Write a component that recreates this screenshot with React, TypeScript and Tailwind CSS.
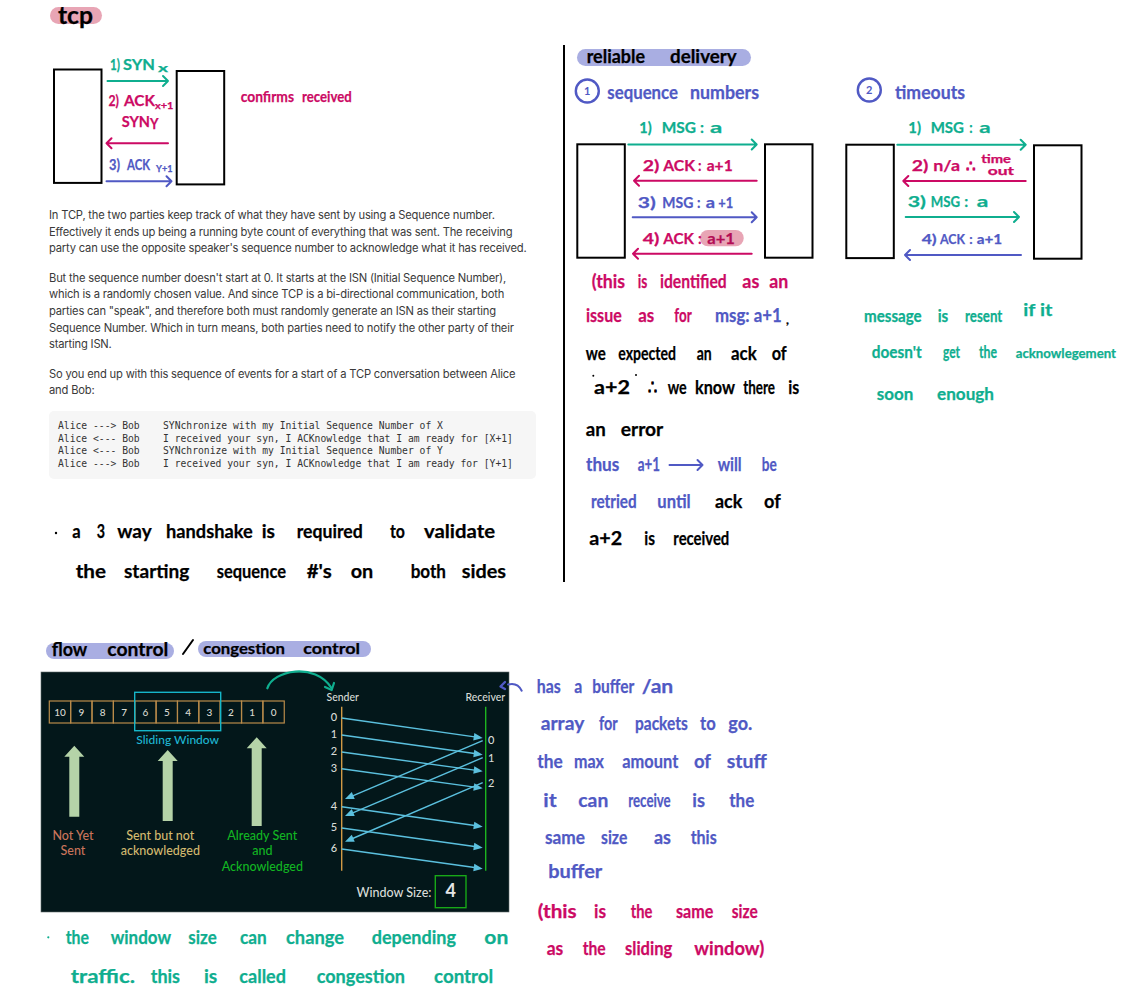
import React from "react";

type W = [string, number, number];

const INK = "font-['Lato'] font-bold text-[19px] fill-current stroke-current stroke-[0.25px]";
const BLACK = "text-black";
const TEAL = "text-[#0fae8f]";
const CRIM = "text-[#cc0a64]";
const INDIGO = "text-[#5059c4]";

function L({ y, w, s = "" }: { y: number; w: W[]; s?: string }) {
  return (
    <>
      {w.map(([t, a, b]) => (
        <text key={t + a} x={a} y={y} textLength={b - a} lengthAdjust="spacingAndGlyphs" className={s}>
          {t}
        </text>
      ))}
    </>
  );
}

function Arrow({ a, b, y, c }: { a: number; b: number; y: number; c: string }) {
  const d = b > a ? -5 : 5;
  return (
    <g className={c}>
      <path
        d={`M${a} ${y}H${b}M${b + d} ${y - 5}L${b} ${y}L${b + d} ${y + 5}`}
        fill="none"
        stroke="currentColor"
        strokeWidth="2"
        strokeLinecap="round"
        strokeLinejoin="round"
      />
    </g>
  );
}

function Box({ x, y }: { x: number; y: number }) {
  return <rect x={x} y={y} width="47.5" height="113.4" fill="white" stroke="black" strokeWidth="2" />;
}

function Circle({ cx, cy, n }: { cx: number; cy: number; n: string }) {
  return (
    <g className={INDIGO}>
      <circle cx={cx} cy={cy} r="11.5" fill="none" stroke="currentColor" strokeWidth="2.4" />
      <text x={cx} y={cy + 4} textAnchor="middle" className="font-['Lato'] font-bold text-[11px] fill-current">
        {n}
      </text>
    </g>
  );
}

function Pill({ cls, vb, w, h, children }: { cls: string; vb: string; w: number; h: number; children: React.ReactNode }) {
  return (
    <div className={`rounded-full ${cls}`}>
      <svg viewBox={vb} width={w} height={h} className="block overflow-visible">
        {children}
      </svg>
    </div>
  );
}

function TcpTitle() {
  return (
    <svg viewBox="50 0 60 34" width="60" height="34" className="ml-[50px] block">
      <rect x="50" y="7" width="52" height="17" rx="8.5" fill="#e8a5b5" />
      <g className={`${INK} ${BLACK}`}>
        <L y={24} s="text-[24px]" w={[["tcp", 58, 93]]} />
      </g>
    </svg>
  );
}

function TcpDiagram() {
  return (
    <svg viewBox="50 60 310 130" width="310" height="130" className="ml-[50px] mt-[26px] block overflow-visible">
      <Box x={54} y={69.5} />
      <Box x={176.7} y={71} />
      <g className={`${INK} ${TEAL}`}>
        <L y={70} s="text-[15px]" w={[["1)", 110, 120], ["SYN", 123, 155]]} />
        <L y={72} s="text-[12px]" w={[["x", 158, 168]]} />
      </g>
      <Arrow a={107.5} b={168} y={81} c={TEAL} />
      <g className={`${INK} ${CRIM}`}>
        <L y={106} s="text-[15px]" w={[["2)", 108.5, 119], ["ACK", 124, 155]]} />
        <L y={108.5} s="text-[10px]" w={[["x+1", 155, 173.5]]} />
        <L y={126.5} s="text-[15px]" w={[["SYN", 121.7, 150]]} />
        <L y={129} s="text-[15px]" w={[["Y", 150, 158.5]]} />
      </g>
      <Arrow a={168} b={106.5} y={143.3} c={CRIM} />
      <g className={`${INK} ${INDIGO}`}>
        <L y={170} s="text-[15px]" w={[["3)", 109, 120], ["ACK", 127, 150]]} />
        <L y={172} s="text-[10px]" w={[["Y+1", 156, 172.5]]} />
      </g>
      <Arrow a={106.5} b={171.5} y={181.3} c={INDIGO} />
      <g className={`${INK} ${CRIM}`}>
        <L y={101.5} s="text-[16px]" w={[["confirms", 240.7, 294], ["received", 302, 351.7]]} />
      </g>
    </svg>
  );
}

function Article() {
  return (
    <div className="mt-[17px] ml-[49px] w-[487px] font-['Inter'] text-[11.2px] tracking-[-0.19px] leading-[16.7px] text-[#3a3a3a] whitespace-nowrap">
      <p>
        In TCP, the two parties keep track of what they have sent by using a Sequence number.
        <br />
        Effectively it ends up being a running byte count of everything that was sent. The receiving
        <br />
        party can use the opposite speaker's sequence number to acknowledge what it has received.
      </p>
      <p className="mt-[12.5px]">
        But the sequence number doesn't start at 0. It starts at the ISN (Initial Sequence Number),
        <br />
        which is a randomly chosen value. And since TCP is a bi-directional communication, both
        <br />
        parties can "speak", and therefore both must randomly generate an ISN as their starting
        <br />
        Sequence Number. Which in turn means, both parties need to notify the other party of their
        <br />
        starting ISN.
      </p>
      <p className="mt-[12.5px]">
        So you end up with this sequence of events for a start of a TCP conversation between Alice
        <br />
        and Bob:
      </p>
      <pre className="mt-[12px] h-[68px] rounded-[5px] bg-[#f6f6f6] pl-[9px] pt-[9px] font-['DejaVu_Sans_Mono'] text-[9.7px] tracking-normal leading-[12.7px] text-[#333]">
        {`Alice ---> Bob    SYNchronize with my Initial Sequence Number of X
Alice <--- Bob    I received your syn, I ACKnowledge that I am ready for [X+1]
Alice <--- Bob    SYNchronize with my Initial Sequence Number of Y
Alice ---> Bob    I received your syn, I ACKnowledge that I am ready for [Y+1]`}
      </pre>
    </div>
  );
}

function Handshake() {
  return (
    <svg viewBox="50 520 470 75" width="470" height="75" className="mt-[41px] ml-[50px] block overflow-visible">
      <circle cx="56" cy="533" r="1.2" fill="black" />
      <g className={`${INK} ${BLACK}`}>
        <L
          y={538.3}
          w={[
            ["a", 72.3, 80.7],
            ["3", 96.7, 105],
            ["way", 117.3, 151.7],
            ["handshake", 166, 252.7],
            ["is", 261.7, 275],
            ["required", 296.7, 362.7],
            ["to", 390, 405],
            ["validate", 424, 495],
          ]}
        />
        <L
          y={578.3}
          w={[
            ["the", 75.7, 106],
            ["starting", 124, 189.3],
            ["sequence", 216.7, 286],
            ["#'s", 306.7, 331.7],
            ["on", 350.7, 373.3],
            ["both", 410.7, 446],
            ["sides", 461.7, 506],
          ]}
        />
      </g>
    </svg>
  );
}

function SequenceNotes() {
  return (
    <svg viewBox="570 75 270 480" width="270" height="480" className="block shrink-0 overflow-visible">
      <Circle cx={587.3} cy={91} n="1" />
      <g className={`${INK} ${INDIGO}`}>
        <L y={99} w={[["sequence", 607.3, 678], ["numbers", 690, 759]]} />
      </g>
      <Box x={577.3} y={144.3} />
      <Box x={765} y={144.3} />
      <rect x="700" y="230" width="43.7" height="16.3" rx="8" fill="#e8a5b5" />
      <g className={`${INK} ${TEAL}`}>
        <L y={133.3} s="text-[15px]" w={[["1)", 639.3, 651.7], ["MSG", 661.7, 696], [":", 700, 704], ["a", 710, 722.3]]} />
      </g>
      <Arrow a={628.3} b={756.7} y={144.5} c={TEAL} />
      <g className={`${INK} ${CRIM}`}>
        <L y={170.7} s="text-[15px]" w={[["2)", 642.7, 659.3], ["ACK", 663.3, 695], [":", 698, 701.5], ["a+1", 706.7, 732.7]]} />
      </g>
      <Arrow a={756.7} b={634} y={180.7} c={CRIM} />
      <g className={`${INK} ${INDIGO}`}>
        <L y={208.3} s="text-[15px]" w={[["3)", 637.7, 655.7], ["MSG", 662.3, 693.3], [":", 697, 700.5], ["a", 705.7, 715], ["+1", 718.3, 733.3]]} />
      </g>
      <Arrow a={632.7} b={756.7} y={217.3} c={INDIGO} />
      <g className={`${INK} ${CRIM}`}>
        <L y={244.3} s="text-[15px]" w={[["4)", 642.7, 659.3], ["ACK", 663.3, 694], [":", 698, 701.7]]} />
        <g className="text-[#b30d55]">
          <L y={243.5} s="text-[15px]" w={[["a+1", 707.3, 735]]} />
        </g>
      </g>
      <Arrow a={751.7} b={633} y={253.7} c={CRIM} />
      <g className={`${INK} ${CRIM}`}>
        <L y={288.3} w={[["(this", 591.7, 625], ["is", 637.7, 647.3], ["identified", 660, 726.7], ["as", 742.3, 759.3], ["an", 769.3, 788.3]]} />
        <L y={321.7} w={[["issue", 586, 621.7], ["as", 638.3, 654.3], ["for", 674.3, 691.7]]} />
      </g>
      <g className={`${INK} ${INDIGO}`}>
        <L y={321.7} w={[["msg: a+1", 715, 781.7]]} />
      </g>
      <g className={`${INK} ${BLACK}`}>
        <L y={324} s="text-[12px]" w={[[",", 786, 789]]} />
        <L y={360} w={[["we", 585.7, 605.7], ["expected", 618.3, 676], ["an", 696.7, 711.7], ["ack", 731, 756.7], ["of", 771.7, 786.7]]} />
        <L y={394.3} w={[["a+2", 594, 630], ["∴", 648, 657], ["we", 667.7, 686.7], ["know", 695, 735], ["there", 743.3, 775], ["is", 788.3, 799.3]]} />
        <L y={436} w={[["an", 585.7, 605.7], ["error", 620.7, 663.3]]} />
      </g>
      <circle cx="593.3" cy="375.7" r="1" fill="black" />
      <circle cx="636" cy="375" r="1" fill="black" />
      <g className={`${INK} ${INDIGO}`}>
        <L y={470.7} w={[["thus", 586, 619.3], ["a+1", 637.7, 660], ["will", 717.7, 741.7], ["be", 761.7, 776.7]]} />
        <L y={507.7} w={[["retried", 591, 636.7], ["until", 657.3, 690.7]]} />
      </g>
      <Arrow a={669.5} b={702.5} y={465} c={INDIGO} />
      <g className={`${INK} ${BLACK}`}>
        <L y={507.7} w={[["ack", 715, 742.3], ["of", 764, 780.7]]} />
        <L y={545} w={[["a+2", 589.3, 622.3], ["is", 644.3, 655], ["received", 673.3, 729.3]]} />
      </g>
    </svg>
  );
}

function TimeoutNotes() {
  return (
    <svg viewBox="840 75 293 340" width="293" height="340" className="block shrink-0 overflow-visible">
      <Circle cx={869.3} cy={90} n="2" />
      <g className={`${INK} ${INDIGO}`}>
        <L y={99} w={[["timeouts", 895, 965]]} />
      </g>
      <Box x={846.3} y={144.7} />
      <Box x={1034} y={145.3} />
      <g className={`${INK} ${TEAL}`}>
        <L y={133.3} s="text-[15px]" w={[["1)", 908.3, 921], ["MSG", 930.7, 964], [":", 969.3, 972.7], ["a", 979.3, 990.7]]} />
      </g>
      <Arrow a={897.3} b={1025.7} y={144.7} c={TEAL} />
      <g className={`${INK} ${CRIM}`}>
        <L y={170.7} s="text-[15px]" w={[["2)", 911.7, 928.3], ["n/a", 933.3, 960], ["∴", 966, 976]]} />
        <L y={162.5} s="text-[10.4px]" w={[["time", 981.3, 1011]]} />
        <L y={175} s="text-[10.4px]" w={[["out", 987.7, 1014]]} />
      </g>
      <Arrow a={1025.7} b={903.3} y={181} c={CRIM} />
      <g className={`${INK} ${TEAL}`}>
        <L y={206.7} s="text-[15px]" w={[["3)", 907.7, 926], ["MSG", 930.7, 960], [":", 964.3, 968.3], ["a", 976.7, 988.3]]} />
      </g>
      <Arrow a={905.7} b={1019} y={217} c={TEAL} />
      <g className={`${INK} ${INDIGO}`}>
        <L y={244.3} s="text-[14px]" w={[["4)", 921.7, 936.7], ["ACK", 940, 965], [":", 969.3, 972.7], ["a+1", 976.7, 1002.3]]} />
      </g>
      <Arrow a={1021} b={905} y={255} c={INDIGO} />
      <g className={`${INK} ${TEAL}`}>
        <L y={321.7} s="text-[17px]" w={[["message", 864, 921.7], ["is", 937.7, 948.3], ["resent", 965, 1002.3]]} />
        <L y={316} s="text-[17px]" w={[["if it", 1023.3, 1052.3]]} />
        <L y={358.3} s="text-[17px]" w={[["doesn't", 871.7, 921.7], ["get", 943, 960], ["the", 979, 997]]} />
        <L y={358.3} s="text-[13px]" w={[["acknowlegement", 1015.7, 1116]]} />
        <L y={400} s="text-[17px]" w={[["soon", 876.7, 913.3], ["enough", 937, 994]]} />
      </g>
    </svg>
  );
}

function Slash() {
  return (
    <svg viewBox="174 636 24 24" width="24" height="24" className="block shrink-0 overflow-visible">
      <path d="M183 653L193 639" stroke="black" strokeWidth="2" strokeLinecap="round" />
    </svg>
  );
}

const CELLS = ["10", "9", "8", "7", "6", "5", "4", "3", "2", "1", "0"];
const DATA: [number, number][] = [[718, 738], [735, 754.7], [752, 771.3], [768.7, 788.3], [806.7, 826.7], [828, 847.7], [849, 868.7]];
const ACKS: [number, number][] = [[740.7, 799], [757.7, 816], [782.7, 841.7]];
const LEFT: [string, number][] = [["0", 717], ["1", 734.3], ["2", 751.3], ["3", 768], ["4", 806.3], ["5", 827.3], ["6", 848.3]];
const RIGHT: [string, number][] = [["0", 740.3], ["1", 757.7], ["2", 783]];
const UPARROWS: [number, number, number, number][] = [[74.3, 745.7, 756.7, 816.7], [167.7, 750, 761, 821], [256.7, 737.3, 748.3, 826]];

function head(x1: number, y1: number, x2: number, y2: number) {
  const an = Math.atan2(y2 - y1, x2 - x1);
  const l = 9;
  const w = 3.8;
  const bx = x2 - Math.cos(an) * l;
  const by = y2 - Math.sin(an) * l;
  const nx = -Math.sin(an) * w;
  const ny = Math.cos(an) * w;
  return `${x2},${y2} ${bx + nx},${by + ny} ${bx - nx},${by - ny}`;
}

function WindowPicture() {
  const t = "font-['Lato'] font-medium";
  return (
    <svg viewBox="41 672 468 240" width="468" height="240" className="ml-[41px] block overflow-visible">
      <rect x="41" y="672" width="468" height="240" fill="#03171a" stroke="#5f6a6a" strokeWidth="0.6" />
      {CELLS.map((n, i) => (
        <g key={n}>
          <rect x={49.3 + i * 21.36} y="701" width="21.36" height="22" fill="none" stroke="#b98b4a" strokeWidth="1.2" />
          <text x={60 + i * 21.36} y="716" textAnchor="middle" fill="#d9d9cf" className={`${t} text-[10px]`}>
            {n}
          </text>
        </g>
      ))}
      <rect x="134.7" y="692.3" width="86" height="38.4" fill="none" stroke="#16b6c9" strokeWidth="1.4" />
      <text x="177.7" y="744" textAnchor="middle" fill="#1fb6d2" className={`${t} text-[12px]`}>
        Sliding Window
      </text>
      {UPARROWS.map(([x, a, b, c]) => (
        <polygon key={x} points={`${x},${a} ${x + 10},${b} ${x + 5},${b} ${x + 5},${c} ${x - 5},${c} ${x - 5},${b} ${x - 10},${b}`} fill="#b5d3a8" />
      ))}
      <g fill="#c9745a" className={`${t} text-[12.5px]`} textAnchor="middle">
        <text x="73" y="840">Not Yet</text>
        <text x="73" y="855.3">Sent</text>
      </g>
      <g fill="#d2b96f" className={`${t} text-[12.5px]`} textAnchor="middle">
        <text x="160.3" y="840">Sent but not</text>
        <text x="160.3" y="855.3">acknowledged</text>
      </g>
      <g fill="#12b522" className={`${t} text-[12.5px]`} textAnchor="middle">
        <text x="262.3" y="840">Already Sent</text>
        <text x="262.3" y="855.3">and</text>
        <text x="262.3" y="870.7">Acknowledged</text>
      </g>
      <g fill="#d8dcd8" className={`${t} text-[10.5px]`} textAnchor="middle">
        <text x="342.7" y="701">Sender</text>
        <text x="485.3" y="701">Receiver</text>
      </g>
      <path d="M341.7 706.7V870.7" stroke="#d19a45" strokeWidth="1.4" />
      <path d="M485.7 706.7V870.7" stroke="#1db41f" strokeWidth="1.4" />
      <g fill="#d8dcd8" className={`${t} text-[11px]`} textAnchor="middle">
        {LEFT.map(([n, y]) => (
          <text key={n} x="334" y={y + 4}>{n}</text>
        ))}
        {RIGHT.map(([n, y]) => (
          <text key={n} x="491.3" y={y + 4}>{n}</text>
        ))}
      </g>
      {DATA.map(([a, b]) => (
        <g key={a}>
          <line x1="341.7" y1={a} x2="480" y2={b - 0.4} stroke="#5bc0de" strokeWidth="1.4" />
          <polygon points={head(341.7, a, 482.7, b)} fill="#5bc0de" />
        </g>
      ))}
      {ACKS.map(([a, b]) => (
        <g key={a}>
          <line x1="482.7" y1={a} x2="348" y2={b - 1.2} stroke="#5bc0de" strokeWidth="1.4" />
          <polygon points={head(482.7, a, 345, b)} fill="#5bc0de" />
        </g>
      ))}
      <text x="394" y="897" textAnchor="middle" fill="#d8dcd8" className={`${t} text-[12.5px]`}>
        Window Size:
      </text>
      <rect x="435.3" y="875.7" width="30.7" height="32" fill="none" stroke="#18a818" strokeWidth="1.4" />
      <text x="450.7" y="897" textAnchor="middle" fill="#e6e6e6" className="font-['Lato'] font-bold text-[18px]">
        4
      </text>
      <path d="M267.3 688.3C273 670 315 662 331.5 688" fill="none" stroke="#0fae8f" strokeWidth="2.2" strokeLinecap="round" />
      <path d="M325 687L331.7 690L334 683" fill="none" stroke="#0fae8f" strokeWidth="2.2" strokeLinecap="round" strokeLinejoin="round" />
    </svg>
  );
}

function TrafficNotes() {
  return (
    <svg viewBox="40 920 470 75" width="470" height="75" className="mt-[8px] ml-[40px] block overflow-visible">
      <circle cx="48.3" cy="937.3" r="1.1" fill="#0fae8f" />
      <g className={`${INK} ${TEAL}`}>
        <L
          y={944}
          w={[
            ["the", 65.7, 89],
            ["window", 110.7, 171],
            ["size", 188.3, 216.7],
            ["can", 240, 266.7],
            ["change", 286, 344],
            ["depending", 371.7, 456],
            ["on", 484.3, 508.3],
          ]}
        />
        <L
          y={983.3}
          w={[
            ["traffic.", 70.7, 135],
            ["this", 150.7, 180],
            ["is", 204, 217.3],
            ["called", 239.3, 286],
            ["congestion", 316.7, 405],
            ["control", 434, 493.3],
          ]}
        />
      </g>
    </svg>
  );
}

function BufferNotes() {
  return (
    <svg viewBox="509 672 270 300" width="270" height="300" className="mt-[35px] block shrink-0 overflow-visible">
      <path d="M521.7 690.7C519 685 514 683 508 684.5" fill="none" stroke="#5059c4" strokeWidth="2" strokeLinecap="round" />
      <path d="M505 682L500.5 686.5L505 689" fill="none" stroke="#5059c4" strokeWidth="2.4" strokeLinecap="round" strokeLinejoin="round" />
      <g className={`${INK} ${INDIGO}`}>
        <L y={693.3} w={[["has", 536.7, 560.7], ["a", 574.3, 582.3], ["buffer", 592.3, 634.3], ["/an", 641.7, 673.3]]} />
        <L y={730} w={[["array", 540.7, 584.3], ["for", 599, 617.7], ["packets", 635, 687.7], ["to", 700, 715.7], ["go.", 728.3, 752.3]]} />
        <L y={768.3} w={[["the", 537.3, 562.7], ["max", 574, 604], ["amount", 622.3, 678.3], ["of", 694, 711], ["stuff", 726.7, 766.7]]} />
        <L y={806.7} w={[["it", 543.3, 556.7], ["can", 578.3, 608.3], ["receive", 628.3, 670.7], ["is", 692.3, 705], ["the", 729.3, 754.3]]} />
        <L y={844} w={[["same", 545, 585], ["size", 601, 627.3], ["as", 654, 671], ["this", 690.7, 716.7]]} />
        <L y={878.3} w={[["buffer", 548.3, 602.3]]} />
      </g>
      <g className={`${INK} ${CRIM}`}>
        <L y={918.3} w={[["(this", 537.7, 576.7], ["is", 594, 606], ["the", 630.7, 652.3], ["same", 676, 713.3], ["size", 731.7, 757.7]]} />
        <L y={955} w={[["as", 546.7, 563.3], ["the", 582.7, 605.7], ["sliding", 625, 672.3], ["window)", 694.3, 764.3]]} />
      </g>
    </svg>
  );
}

export default function App() {
  return (
    <div className="flex h-[1000px] w-[1133px] flex-col overflow-hidden bg-white">
      <div className="flex h-[637px]">
        <div className="flex w-[563px] shrink-0 flex-col">
          <TcpTitle />
          <TcpDiagram />
          <Article />
          <Handshake />
        </div>
        <div className="mt-[45px] flex h-[537px] flex-1 flex-col border-l-2 border-black">
          <div className="ml-[12px] mt-[4px] w-[174px]">
            <Pill cls="bg-[#a9aee2]" vb="577 49 174 17" w={174} h={17}>
              <g className={`${INK} ${BLACK}`}>
                <L y={62.7} w={[["reliable", 586.7, 645], ["delivery", 670, 736.7]]} />
              </g>
            </Pill>
          </div>
          <div className="ml-[5px] mt-[9px] flex">
            <SequenceNotes />
            <TimeoutNotes />
          </div>
        </div>
      </div>
      <div className="flex">
        <div className="w-[509px] shrink-0">
          <div className="flex h-[35px] items-start">
            <div className="ml-[46px] mt-[6px]">
              <Pill cls="bg-[#a9aee2]" vb="46 643 128 16" w={128} h={16}>
                <g className={`${INK} ${BLACK}`}>
                  <L y={656} w={[["flow", 51.7, 87.3], ["control", 107.3, 168.3]]} />
                </g>
              </Pill>
            </div>
            <Slash />
            <div className="mt-[4px]">
              <Pill cls="bg-[#a9aee2]" vb="198 641 172.5 16" w={172.5} h={16}>
                <g className={`${INK} ${BLACK}`}>
                  <L y={654} s="text-[15px]" w={[["congestion", 203.3, 285], ["control", 303.3, 360]]} />
                </g>
              </Pill>
            </div>
          </div>
          <WindowPicture />
          <TrafficNotes />
        </div>
        <BufferNotes />
      </div>
    </div>
  );
}
